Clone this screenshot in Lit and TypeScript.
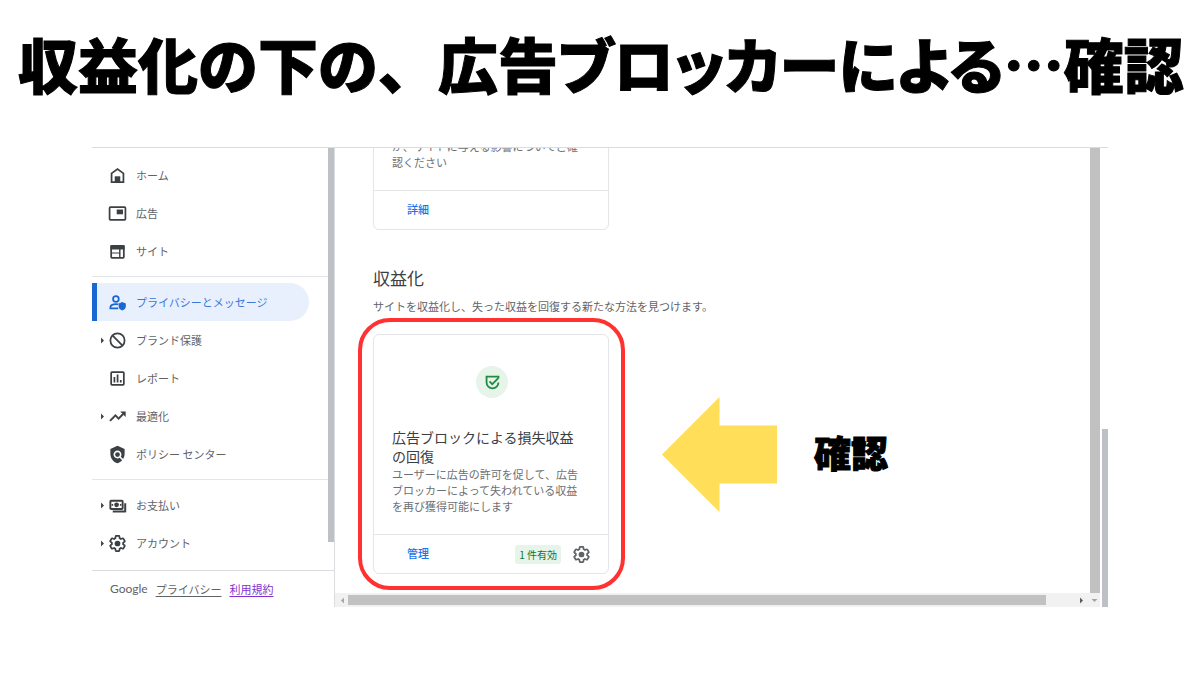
import { LitElement, html, svg, css, nothing } from "lit";
import { customElement, property } from "lit/decorators.js";

const GEAR =
  "M19.43 12.98c.04-.32.07-.64.07-.98 0-.34-.03-.66-.07-.98l2.11-1.65c.19-.15.24-.42.12-.64l-2-3.46c-.09-.16-.26-.25-.44-.25-.06 0-.12.01-.17.03l-2.49 1c-.52-.4-1.08-.73-1.69-.98l-.38-2.65C14.46 2.18 14.25 2 14 2h-4c-.25 0-.46.18-.49.42l-.38 2.65c-.61.25-1.17.59-1.69.98l-2.49-1c-.06-.02-.12-.03-.18-.03-.17 0-.34.09-.43.25l-2 3.46c-.13.22-.07.49.12.64l2.11 1.65c-.04.32-.07.65-.07.98 0 .33.03.66.07.98l-2.11 1.65c-.19.15-.24.42-.12.64l2 3.46c.09.16.26.25.44.25.06 0 .12-.01.17-.03l2.49-1c.52.4 1.08.73 1.69.98l.38 2.65c.03.24.24.42.49.42h4c.25 0 .46-.18.49-.42l.38-2.65c.61-.25 1.17-.59 1.69-.98l2.49 1c.06.02.12.03.18.03.17 0 .34-.09.43-.25l2-3.46c.12-.22.07-.49-.12-.64l-2.11-1.65z";

const ICONS: Record<string, unknown> = {
  home: svg`<path d="M4.500 20.500V9.300L12 3.800l7.500 5.500v11.200z" fill="none" stroke="currentColor" stroke-width="2.200"/><path d="M8.500 13h7v8h-7z"/>`,
  ads: svg`<rect x="2" y="4" width="20" height="16" rx="1" fill="none" stroke="currentColor" stroke-width="2.200"/><path d="M11 7h8v6h-8z"/>`,
  sites: svg`<rect x="4" y="5" width="16" height="15" rx="1" fill="none" stroke="currentColor" stroke-width="2.200"/><path d="M3 4h18v5.500H3zM4 13.200h11v1.300H4zM14 9h1.800v11H14z"/>`,
  privacy: svg`<circle cx="10" cy="7.500" r="3.600" fill="none" stroke="currentColor" stroke-width="2.200"/><path d="M13 19.500H3V18c0-2.700 3.500-4 7-4 1 0 2 .100 3 .300" fill="none" stroke="currentColor" stroke-width="2.200"/><path d="M18 11.500l4.500 1.900v3.300c0 2.500-1.900 4.700-4.500 5.300-2.600-.600-4.500-2.800-4.500-5.300v-3.300z"/>`,
  block: svg`<g fill="none" stroke="currentColor" stroke-width="2.200"><circle cx="12" cy="12" r="9"/><path d="M5.600 5.600l12.800 12.800"/></g>`,
  report: svg`<rect x="4" y="4" width="16" height="16" rx="1" fill="none" stroke="currentColor" stroke-width="2.200"/><path d="M7 10h2.200v7H7zM11 7h2.200v10H11zM15 14h2.200v3H15z"/>`,
  trend: svg`<path d="M16 6l2.290 2.290-4.880 4.880-4-4L2 16.590 3.410 18l6-6 4 4 6.300-6.290L22 12V6z" stroke="currentColor" stroke-width=".6"/>`,
  policy: svg`<path d="M21 5l-9-4-9 4v6c0 5.550 3.840 10.740 9 12 2.300-.560 4.330-1.900 5.880-3.710l-3.120-3.120c-1.940 1.290-4.580 1.070-6.290-.640-1.950-1.950-1.950-5.120 0-7.070 1.950-1.950 5.120-1.950 7.070 0 1.710 1.710 1.920 4.350.64 6.290l2.900 2.900C20.290 15.690 21 13.380 21 11V5z"/><circle cx="12" cy="12" r="3"/>`,
  pay: svg`<rect x="3" y="6" width="15.500" height="10.500" rx="1" fill="none" stroke="currentColor" stroke-width="2.400"/><circle cx="10.800" cy="11.200" r="3"/><path d="M4.500 10.200h2v2h-2zM15 10.200h2v2h-2zM6 18.300h14.500V9H23v10.500c0 .800-.400 1.200-1.200 1.200H6z"/>`,
  gear: svg`<path transform="translate(.6 .6) scale(.95)" d=${GEAR} fill="none" stroke="currentColor" stroke-width="2.300"/><circle cx="12" cy="12" r="3.600"/>`,
  shield: svg`<path d="M19.500 7V4.500h-15V12a7.500 7.500 0 0 0 15 0M8.200 10.700l3.500 3.500 7.300-7.300" fill="none" stroke="currentColor" stroke-width="2.300"/>`,
  caret: svg`<path d="M7 2l10 10L7 22z"/>`,
};

@customElement("ui-icon")
class UiIcon extends LitElement {
  @property() name = "";
  static styles = css`
    :host { display: block; width: 19px; height: 19px; flex: none; }
    svg { display: block; width: 100%; height: 100%; fill: currentColor; }
  `;
  render() {
    return html`<svg viewBox="0 0 24 24" aria-hidden="true">${ICONS[this.name]}</svg>`;
  }
}

type Item = { icon: string; label: string; expandable?: boolean; active?: boolean };

const GROUPS: Item[][] = [
  [
    { icon: "home", label: "ホーム" },
    { icon: "ads", label: "広告" },
    { icon: "sites", label: "サイト" },
  ],
  [
    { icon: "privacy", label: "プライバシーとメッセージ", active: true },
    { icon: "block", label: "ブランド保護", expandable: true },
    { icon: "report", label: "レポート" },
    { icon: "trend", label: "最適化", expandable: true },
    { icon: "policy", label: "ポリシー センター" },
  ],
  [
    { icon: "pay", label: "お支払い", expandable: true },
    { icon: "gear", label: "アカウント", expandable: true },
  ],
];

@customElement("side-nav")
class SideNav extends LitElement {
  static styles = css`
    :host { display: block; width: 242px; flex: none; border-right: 1px solid #dadce0; font-size: 11px; line-height: 16px; color: #5f6368; }
    .scroller { display: flex; }
    nav { flex: 1; padding: 8px 0; }
    .bar { width: 6px; background: #bdc1c6; margin-bottom: 28px; }
    .group + .group { border-top: 1px solid #e3e5e8; margin-top: 6px; padding-top: 6px; }
    .item { display: flex; align-items: center; height: 38px; box-sizing: border-box; padding-left: 7px; color: inherit; text-decoration: none; }
    .item.active { margin-right: 19px; border-left: 5px solid #1967d2; padding-left: 2px; background: #e8f0fe; border-radius: 0 19px 19px 0; color: #3b78d8; }
    .caret { width: 7px; height: 7px; color: #3c4043; }
    .lead { width: 9px; display: flex; }
    .icon { color: #3c4043; margin-right: 9px; }
    .active .icon { color: #1967d2; }
    footer { display: flex; gap: 8px; border-top: 1px solid #dadce0; padding: 10px 0 10px 18px; }
    .brand { font-family: Lato, sans-serif; font-size: 12px; }
    .policy { color: inherit; }
    .terms { color: #8430ce; }
    .policy, .terms { text-underline-offset: 2px; }
  `;
  render() {
    return html`
      <div class="scroller">
        <nav>
          ${GROUPS.map(
            (g) => html`<div class="group">
              ${g.map(
                (i) => html`<a href="#" class="item ${i.active ? "active" : ""}">
                  <span class="lead">${i.expandable ? html`<ui-icon class="caret" name="caret"></ui-icon>` : nothing}</span>
                  <ui-icon class="icon" name=${i.icon}></ui-icon>${i.label}
                </a>`
              )}
            </div>`
          )}
        </nav>
        <div class="bar"></div>
      </div>
      <footer>
        <span class="brand">Google</span><a class="policy" href="#">プライバシー</a><a class="terms" href="#">利用規約</a>
      </footer>
    `;
  }
}

@customElement("message-card")
class MessageCard extends LitElement {
  static styles = css`
    :host { display: block; position: relative; box-sizing: border-box; width: 236px; flex: none; border: 1px solid #e3e5e8; border-radius: 6px; font-size: 11px; line-height: 16px; color: #6b6f74; }
    .body { padding: 31px 24px 20px 18px; }
    .foot { display: flex; align-items: center; height: 38px; border-top: 1px solid #e3e5e8; padding: 0 17px 0 33px; }
  `;
  render() {
    return html`<div class="body"><slot></slot></div>
      <div class="foot"><slot name="foot"></slot></div>
      <slot name="mark"></slot>`;
  }
}

@customElement("app-root")
class AppRoot extends LitElement {
  static styles = css`
    :host { display: block; background: #fff; font-family: "Noto Sans CJK JP", sans-serif; color: #3c4043; }
    h1 { margin: 0; padding: 19px 0 40px 18px; font-size: 60px; line-height: 88px; font-weight: 900; color: #000; white-space: nowrap; overflow: hidden; -webkit-text-stroke: 1px #000; }
    .kana { font-feature-settings: "palt"; }
    .frame { display: flex; margin: 0 92px; border-top: 1px solid #dadce0; height: 459px; }
    .pane { flex: 1; min-width: 0; display: grid; grid-template-columns: 1fr 10px; grid-template-rows: 1fr 14px; }
    .content { overflow: hidden; padding-left: 38px; }
    .clipped { margin-top: -42px; }
    h2 { margin: 36px 0 8px; font-size: 17px; line-height: 24px; font-weight: 400; }
    .sub { margin: 0 0 20px; font-size: 11px; line-height: 16px; color: #5f6368; }
    .row { display: flex; align-items: center; }
    .badge { display: grid; place-items: center; width: 32px; height: 32px; margin: 0 auto 30px 84px; border-radius: 50%; background: #e6f4ea; color: #1e8e3e; }
    h3 { margin: 0; font-size: 14px; line-height: 19px; font-weight: 400; color: #3c4043; }
    p { margin: 0; }
    .link { color: #1a73e8; text-decoration: none; font-weight: 500; line-height: 16px; padding-bottom: 2px; }
    .chip { margin-left: auto; margin-right: 11px; padding: 0 4px; border-radius: 3px; background: #e6f4ea; color: #137333; font-size: 10px; line-height: 19px; font-weight: 400; }
    .cog { display: block; margin: 0; padding: 0; border: 0; background: none; color: #5f6368; }
    .ring { position: absolute; inset: -17px -17px -17px -16px; border: 4px solid #ff3131; border-radius: 32px; pointer-events: none; }
    .arrow { display: block; width: 115px; height: 115px; margin: 0 37px 0 53px; fill: #ffde59; }
    .note { font-size: 37px; line-height: 54px; padding-bottom: 5px; font-weight: 900; color: #000; -webkit-text-stroke: 1px #000; }
    .vbar { background: #c1c1c1; }
    .hbar { grid-column: 1 / -1; display: flex; align-items: center; background: #f1f1f1; padding: 0 2px 0 4px; color: #555; }
    .thumb { width: 92%; height: 10px; background: #c1c1c1; margin: 0 auto 0 2px; }
    .tick { width: 7px; height: 7px; }
    .faint { color: #a3a3a3; }
    .left { transform: rotate(180deg); }
    .down { transform: rotate(90deg); margin-left: 6px; }
    .outer { width: 6px; margin: 281px 0 0 2px; background: #bdc1c6; }
  `;
  render() {
    return html`
      <h1>収益化の下の、広告<span class="kana">ブロッカーによる</span>…確認</h1>
      <div class="frame">
        <side-nav></side-nav>
        <main class="pane">
          <div class="content">
            <message-card class="clipped">
              <p>が、サイトに与える影響についてご確認ください</p>
              <a slot="foot" class="link" href="#">詳細</a>
            </message-card>
            <h2>収益化</h2>
            <p class="sub">サイトを収益化し、失った収益を回復する新たな方法を見つけます。</p>
            <div class="row">
              <message-card>
                <div class="badge"><ui-icon name="shield"></ui-icon></div>
                <h3>広告ブロックによる損失収益の回復</h3>
                <p>ユーザーに広告の許可を促して、広告ブロッカーによって失われている収益を再び獲得可能にします</p>
                <a slot="foot" class="link" href="#">管理</a>
                <span slot="foot" class="chip">1 件有効</span>
                <button slot="foot" class="cog" aria-label="設定"><ui-icon name="gear"></ui-icon></button>
                <div slot="mark" class="ring"></div>
              </message-card>
              <svg class="arrow" viewBox="0 0 115 115" aria-hidden="true"><path d="M0 57.500L57.500 0v28.500H115v58H57.500V115z" /></svg>
              <span class="note">確認</span>
            </div>
          </div>
          <div class="vbar"></div>
          <div class="hbar">
            <ui-icon class="tick left faint" name="caret"></ui-icon>
            <div class="thumb"></div>
            <ui-icon class="tick" name="caret"></ui-icon>
            <ui-icon class="tick down faint" name="caret"></ui-icon>
          </div>
        </main>
        <div class="outer"></div>
      </div>
    `;
  }
}
